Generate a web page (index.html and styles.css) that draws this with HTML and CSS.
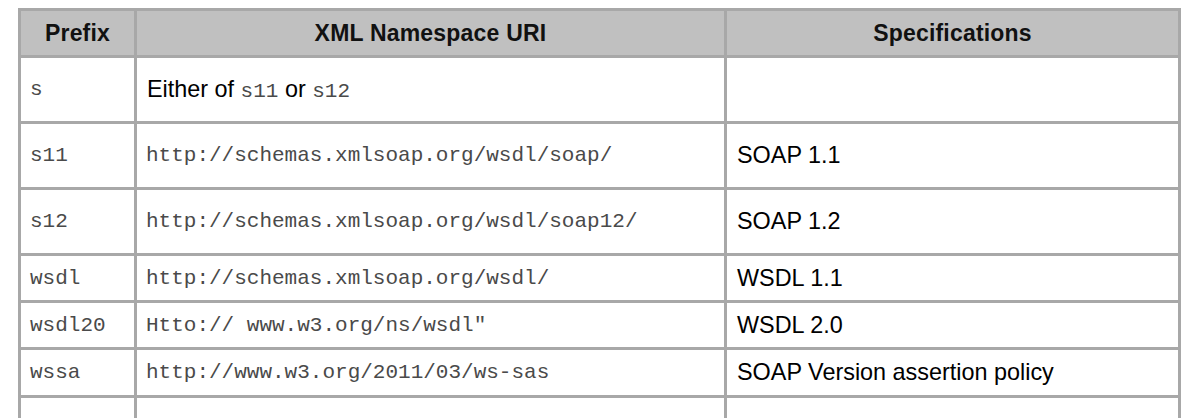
FILE: index.html
```html
<!DOCTYPE html>
<html>
<head>
<meta charset="utf-8">
<link rel="stylesheet" href="styles.css">
</head>
<body>
<table class="ns">
  <colgroup>
    <col class="c1"><col class="c2"><col class="c3">
  </colgroup>
  <thead>
    <tr class="head">
      <th>Prefix</th>
      <th>XML Namespace URI</th>
      <th>Specifications</th>
    </tr>
  </thead>
  <tbody>
    <tr class="tall">
      <td class="mono">s</td>
      <td>Either of <span class="mono">s11</span> or <span class="mono">s12</span></td>
      <td></td>
    </tr>
    <tr class="tall">
      <td class="mono">s11</td>
      <td class="mono">http://schemas.xmlsoap.org/wsdl/soap/</td>
      <td>SOAP 1.1</td>
    </tr>
    <tr class="tall">
      <td class="mono">s12</td>
      <td class="mono">http://schemas.xmlsoap.org/wsdl/soap12/</td>
      <td>SOAP 1.2</td>
    </tr>
    <tr class="short">
      <td class="mono">wsdl</td>
      <td class="mono">http://schemas.xmlsoap.org/wsdl/</td>
      <td>WSDL 1.1</td>
    </tr>
    <tr class="short">
      <td class="mono">wsdl20</td>
      <td class="mono">Htto:// www.w3.org/ns/wsdl"</td>
      <td>WSDL 2.0</td>
    </tr>
    <tr class="short last">
      <td class="mono">wssa</td>
      <td class="mono">http://www.w3.org/2011/03/ws-sas</td>
      <td>SOAP Version assertion policy</td>
    </tr>
    <tr class="tail">
      <td></td><td></td><td></td>
    </tr>
  </tbody>
</table>
</body>
</html>
```
FILE: styles.css
```css
html, body {
  margin: 0;
  padding: 0;
  background: #ffffff;
  overflow: hidden;
}

.ns {
  margin: 8px 0 0 18px;
  width: 1160px;
  table-layout: fixed;
  border-collapse: collapse;
  font-family: "Liberation Sans", Arial, sans-serif;
  font-size: 23.4px;
  color: #000;
}

.c1 { width: 116px; }
.c2 { width: 590px; }
.c3 { width: 454px; }

.ns th,
.ns td {
  border: 3px solid #a8a8a8;
  padding: 0 10px;
  vertical-align: middle;
  text-align: left;
  white-space: nowrap;
  overflow: hidden;
}

.ns th {
  background: #c0c0c0;
  font-weight: bold;
  text-align: center;
  font-size: 23px;
  letter-spacing: 0.2px;
  color: #111;
}

.head { height: 47px; }
.tall { height: 66px; }
.short { height: 47px; }
.last { height: 48px; }
.tail { height: 40px; }

.mono {
  font-family: "Liberation Mono", "Courier New", monospace;
  font-size: 21px;
  color: #4a4a4a;
}

td.mono { padding-left: 9px; }
```
